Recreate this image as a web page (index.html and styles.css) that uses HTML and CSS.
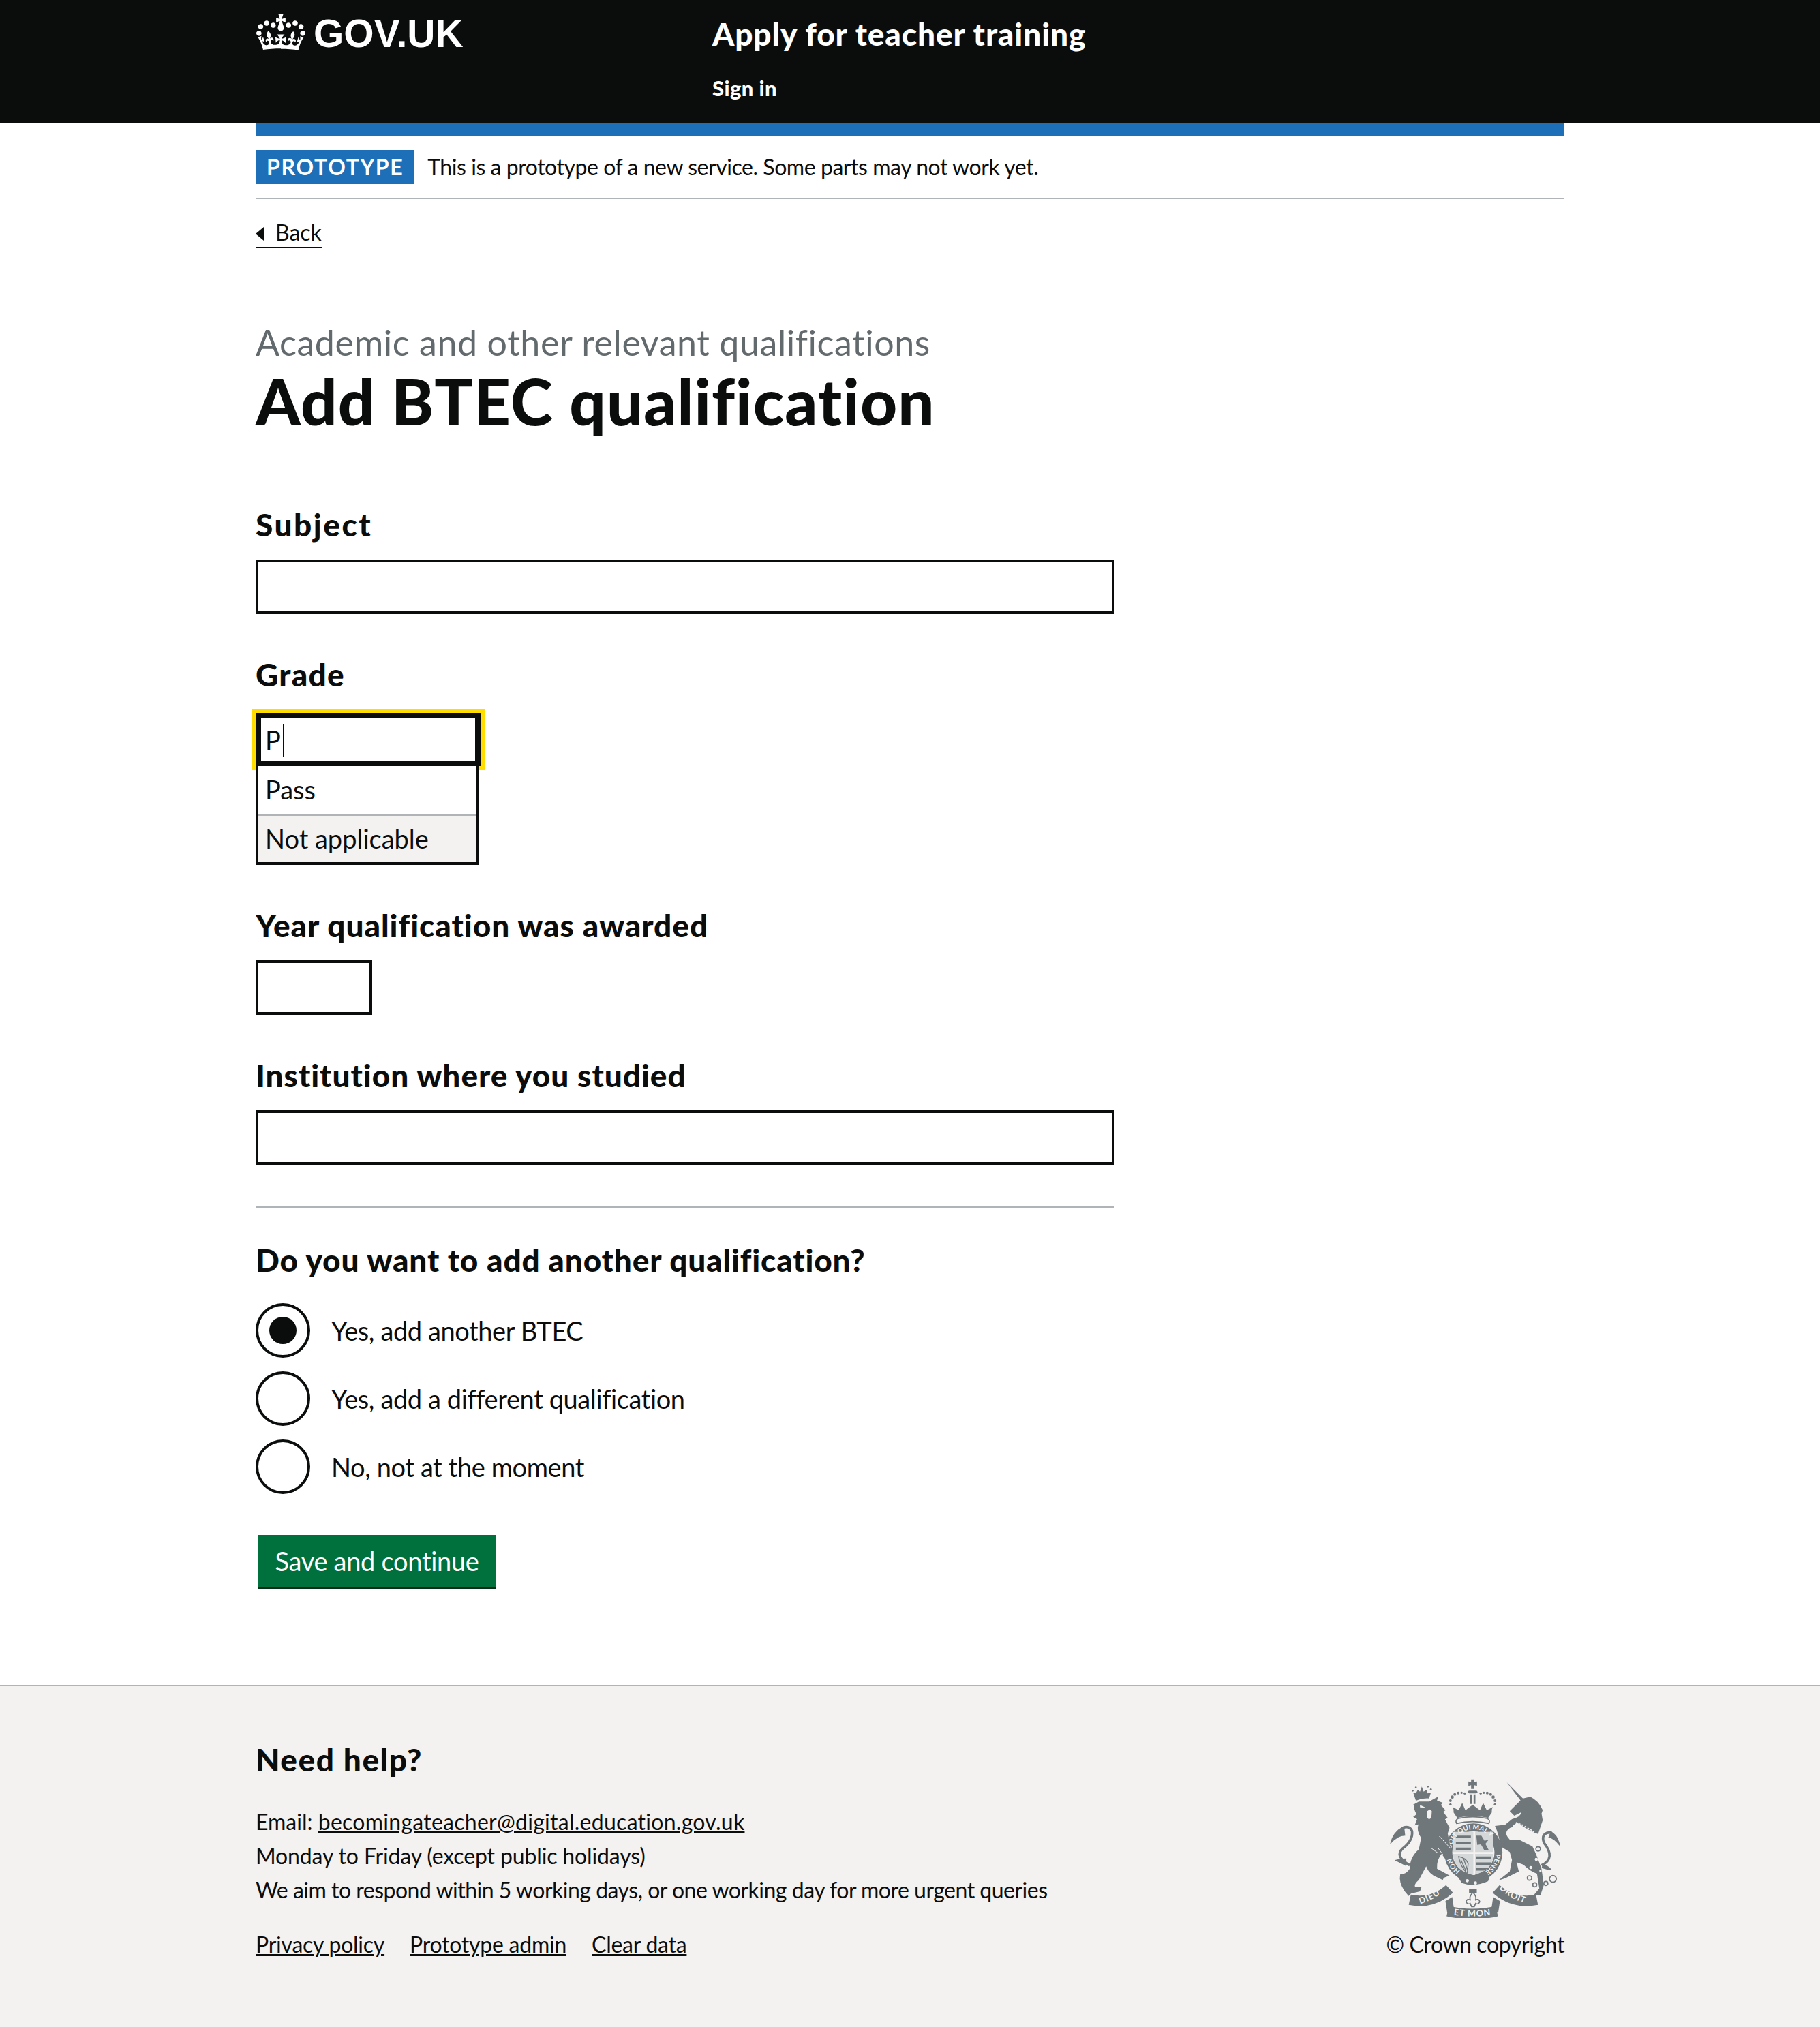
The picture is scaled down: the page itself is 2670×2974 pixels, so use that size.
FILE: index.html
```html
<!DOCTYPE html>
<html lang="en">
<head>
    <meta charset="UTF-8">
    <title>Add BTEC qualification</title>
    <link rel="stylesheet" href="styles.css">
</head>
<body>
    <header class="header">
        <div class="container header-inner">
            <a class="logo" href="#">
                <svg class="logo-crown" viewBox="0 0 132 97"><path fill="currentColor" fill-rule="evenodd" d="M25 30.2c3.5 1.5 7.7-.2 9.1-3.7 1.5-3.6-.2-7.8-3.9-9.2-3.6-1.4-7.6.3-9.1 3.9-1.4 3.5.3 7.5 3.9 9zM9 39.5c3.6 1.5 7.8-.2 9.2-3.7 1.5-3.6-.2-7.8-3.9-9.1-3.6-1.5-7.6.2-9.1 3.8-1.4 3.5.3 7.5 3.8 9zM4.4 57.2c3.5 1.5 7.7-.2 9.1-3.8 1.5-3.6-.2-7.7-3.9-9.1-3.5-1.5-7.6.3-9.1 3.8-1.4 3.5.3 7.6 3.9 9.1zm38.3-21.4c3.5 1.5 7.7-.2 9.1-3.8 1.5-3.6-.2-7.7-3.9-9.1-3.6-1.5-7.6.3-9.1 3.8-1.3 3.6.4 7.7 3.9 9.1zm64.4-5.6c-3.6 1.5-7.8-.2-9.1-3.7-1.5-3.6.2-7.8 3.8-9.2 3.6-1.4 7.7.3 9.2 3.9 1.3 3.5-.4 7.5-3.9 9zm15.9 9.3c-3.6 1.5-7.7-.2-9.1-3.7-1.5-3.6.2-7.8 3.7-9.1 3.6-1.5 7.7.2 9.2 3.8 1.5 3.5-.3 7.5-3.8 9zm4.7 17.7c-3.6 1.5-7.8-.2-9.2-3.8-1.5-3.6.2-7.7 3.9-9.1 3.6-1.5 7.7.3 9.2 3.8 1.3 3.5-.4 7.6-3.9 9.1zM89.3 35.8c-3.6 1.5-7.8-.2-9.2-3.8-1.4-3.6.2-7.7 3.9-9.1 3.6-1.5 7.7.3 9.2 3.8 1.4 3.6-.3 7.7-3.9 9.1zM69.7 17.7l8.9 4.7V9.3l-8.9 2.8c-.2-.3-.5-.6-.9-.9L72.4 0H59.6l3.5 11.2c-.3.3-.6.5-.9.9l-8.8-2.8v13.1l8.8-4.7c.3.3.6.7.9.9l-5 15.4v.1c-.2.8-.4 1.6-.4 2.4 0 4.1 3.1 7.5 7 8.1h.2c.3 0 .7.1 1 .1.4 0 .7 0 1-.1h.2c4-.6 7.1-4.1 7.1-8.1 0-.8-.1-1.7-.4-2.4V34l-5.1-15.4c.4-.2.7-.6 1-.9zM66 92.8c16.9 0 32.8 1.1 47.1 3.2 4-16.9 8.9-26.7 14-33.5l-9.6-3.4c1 4.9 1.1 7.2 0 10.2-1.5-1.4-3-4.3-4.2-8.7L108.6 76c2.8-2 5-3.2 7.5-3.3-4.4 9.4-10 11.9-13.6 11.2-4.3-.8-6.3-4.6-5.6-7.9 1-4.7 5.7-5.9 8-.5 4.3-8.7-3-11.4-7.6-8.8 7.1-7.2 7.9-13.5 2.1-21.1-8 6.1-8.1 12.3-4.5 20.8-4.7-5.4-12.1-2.5-9.5 6.2 3.4-5.2 7.9-2 7.2 3.1-.6 4.3-6.4 7.8-13.5 7.2-10.3-.9-10.9-8-11.2-13 2.5-.5 7.1 1.8 11 7.3L80.2 60c-4.1 4.4-8 5.3-12.3 5.4 1.4-4.4 8-11.6 8-11.6H55.5s6.4 7.2 7.9 11.6c-4.2-.1-8-1-12.3-5.4l1.4 16.4c3.9-5.5 8.5-7.7 10.9-7.3-.3 5-.9 12.1-11.1 13-7.2.6-12.9-2.9-13.5-7.2-.7-5 3.8-8.3 7.1-3.1 2.7-8.7-4.6-11.6-9.4-6.2 3.7-8.5 3.6-14.7-4.6-20.8-5.8 7.6-5 13.9 2.2 21.1-4.7-2.6-11.9.1-7.7 8.8 2.3-5.5 7.1-4.2 8.1.5.7 3.3-1.3 7.1-5.7 7.9-3.5.7-9-1.8-13.5-11.2 2.5.1 4.7 1.3 7.5 3.3l-4.7-15.4c-1.2 4.4-2.7 7.2-4.3 8.7-1.1-3-.9-5.3 0-10.2l-9.5 3.4c5 6.9 9.9 16.7 14 33.5 14.8-2.1 30.8-3.2 47.7-3.2z"></path></svg>
                <span class="logo-text">GOV.UK</span>
            </a>
            <div class="service">
                <a class="service-name" href="#">Apply for teacher training</a>
                <a class="service-nav" href="#">Sign in</a>
            </div>
        </div>
    </header>

    <div class="container">
        <div class="blue-bar"></div>
        <div class="phase">
            <strong class="tag">PROTOTYPE</strong>
            <span class="phase-text">This is a prototype of a new service. Some parts may not work yet.</span>
        </div>
        <a class="back" href="#">Back</a>

        <main class="main">
            <span class="caption">Academic and other relevant qualifications</span>
            <h1 class="title">Add BTEC qualification</h1>

            <form class="form">
                <div class="group">
                    <label class="label label-subject">Subject</label>
                    <input class="input" type="text">
                </div>

                <div class="group">
                    <label class="label label-combo">Grade</label>
                    <div class="combo">
                        <div class="combo-input">P<span class="caret"></span></div>
                        <ul class="combo-list">
                            <li class="combo-item">Pass</li>
                            <li class="combo-item combo-item-hover">Not applicable</li>
                        </ul>
                    </div>
                </div>

                <div class="group">
                    <label class="label">Year qualification was awarded</label>
                    <input class="input input-year" type="text">
                </div>

                <div class="group">
                    <label class="label">Institution where you studied</label>
                    <input class="input" type="text">
                </div>

                <hr class="rule">

                <h2 class="legend">Do you want to add another qualification?</h2>
                <div class="radios">
                    <label class="radio"><span class="radio-mark radio-mark-on"></span>Yes, add another BTEC</label>
                    <label class="radio"><span class="radio-mark"></span>Yes, add a different qualification</label>
                    <label class="radio"><span class="radio-mark"></span>No, not at the moment</label>
                </div>

                <button class="button" type="button">Save and continue</button>
            </form>
        </main>
    </div>

    <footer class="footer">
        <div class="container footer-inner">
            <div class="footer-left">
                <h2 class="footer-title">Need help?</h2>
                <p class="footer-line">Email: <a class="footer-mail" href="#">becomingateacher@digital.education.gov.uk</a></p>
                <p class="footer-line footer-hours">Monday to Friday (except public holidays)</p>
                <p class="footer-line footer-aim">We aim to respond within 5 working days, or one working day for more urgent queries</p>
                <div class="footer-links">
                    <a href="#">Privacy policy</a>
                    <a href="#">Prototype admin</a>
                    <a href="#">Clear data</a>
                </div>
            </div>
            <div class="footer-right">
                <svg class="crest" viewBox="115 90 755 612">
                    <defs>
                        <path id="garter-top" d="M388 397A98 98 0 0 1 583 405"/>
                        <path id="garter-right" d="M583 420A98 98 0 0 1 520 505"/>
                        <path id="garter-left" d="M428 494A99 99 0 0 1 386 420"/>
                        <path id="motto-left" d="M250 640Q315 622 366 574"/>
                        <path id="motto-mid" d="M398 688Q480 702 572 688"/>
                        <path id="motto-right" d="M598 572Q650 622 735 644"/>
                        <clipPath id="shield"><path d="M396 322H574V420Q574 490 485 514 396 490 396 420Z"/></clipPath>
                    </defs>

                    <!-- royal crown -->
                    <g class="crest-fill">
                        <path d="M475 92h14v12l12-3v20l-12-3v16h-14v-16l-12 3v-20l12 3z"/>
                        <rect x="461" y="142" width="42" height="12" rx="6"/>
                        <path d="M470 158h8v42h-8zM486 158h8v42h-8z"/>
                        <circle cx="392" cy="170" r="7"/><circle cx="384" cy="186" r="6"/><circle cx="384" cy="202" r="5"/><circle cx="403" cy="158" r="6"/><circle cx="418" cy="152" r="6"/><circle cx="433" cy="151" r="5"/><circle cx="447" cy="154" r="5"/>
                        <circle cx="572" cy="170" r="7"/><circle cx="580" cy="186" r="6"/><circle cx="580" cy="202" r="5"/><circle cx="561" cy="158" r="6"/><circle cx="546" cy="152" r="6"/><circle cx="531" cy="151" r="5"/><circle cx="517" cy="154" r="5"/>
                        <path d="M398 238q2-12-4-24l26 14 16-32 14 32 32-24 32 24 14-32 16 32 26-14q-6 12-4 24l-16 24q-68-18-136 0z"/>
                    </g>
                    <path class="crest-band" d="M411 286q-8-16 8-22 64-14 126 0 16 6 8 22-72-16-142 0z"/>

                    <!-- garter and shield -->
                    <circle class="crest-fill" cx="485" cy="414" r="128"/>
                    <circle class="crest-bg" cx="485" cy="414" r="93"/>
                    <g clip-path="url(#shield)">
                        <rect class="crest-shade" x="396" y="322" width="178" height="194"/>
                        <path class="crest-stripes" d="M408 345h66M408 372h66M408 398h66M498 437h66M498 463h66M498 488h66"/>
                        <path class="crest-fill" d="M498 340h22l14 22 18-4-14 18 14 26h-20l-14-24-16 2z"/>
                        <path class="crest-harp" d="M420 432q30 4 42 30l-4 44q-30-30-38-74zM430 446l22 48M442 442l16 46"/>
                        <path class="crest-cross" d="M489 320V514M396 416H574"/>
                    </g>
                    <text class="crest-text"><textPath href="#garter-top">SOIT QUI MAL Y</textPath></text>
                    <text class="crest-text"><textPath href="#garter-right">PENSE</textPath></text>
                    <text class="crest-text"><textPath href="#garter-left">HONI</textPath></text>
                    <path class="crest-fill" d="M412 512q16-18 38 2 50 22 108 0l-8 26q-60 28-116 8z"/>
                    <circle class="crest-bg" cx="458" cy="538" r="7"/><circle class="crest-bg" cx="494" cy="548" r="7"/>

                    <!-- lion -->
                    <g class="crest-fill">
                        <path d="M218 205l27-15h45l40-22-5 17 25 10-8 10 20 23-10 7 20 27-12 6 20 37-8 25 23 115-35-5-15-20q-22 25-20 65l55 30-25 10-5 10-25-12q-35-13-48-48l-32 60q-25 20-15 32l27-2-7 20-40 10-10 10-17-20q-28-40-20-75 27 0 42-25 0-50 40-85l10-50q-22-35-12-60l-16 5 10-28-17-10 15-12q-15-25-12-45z"/>
                        <path d="M232 186l-12-36 12 4 8-16 10 8 8-22 8 22 12-8 6 16 14-4-8 26q-30-2-58 10z"/>
                        <circle cx="218" cy="142" r="4"/><circle cx="298" cy="136" r="4"/><circle cx="232" cy="128" r="4"/><circle cx="285" cy="124" r="4"/>
                        <path d="M180 298q-50 22-62 80 32-38 67-38zM190 440q-30 0-52 8 20 10 50 25z"/>
                    </g>
                    <path class="crest-stroke" d="M205 470q-70-40-30-75 45-35 40-75-10-25-40-15"/>
                    <path class="crest-bg" d="M250 205l26 12-26-2zM282 232l12-8 8 8-2 30-10 6-10-8z"/>
                    <path class="crest-cutline" d="M335 342l48 52M300 395l30 22M330 395l22 30"/>

                    <!-- unicorn -->
                    <path class="crest-fill" d="M632 105l74 74-12 8z"/>
                    <path class="crest-fill" d="M645 232l55-55 35-8q35 15 55 58l-5 15 5 30-20 60q-25-5-93-50l-32 25q-30 20 0 50h40l60 30q20 40 40 100l10 70-15 45h-30l25-30-10-65q-30-10-60-40l-30-10 10 40-60 30-30 10 50-40 10-50-10-35-40-25q-10-60-25-90l45-5 30-25q40-10 40-30l-30 15z"/>
                    <path class="crest-stroke" d="M785 470q65-30 10-100-15-45 35-45"/>
                    <path class="crest-fill" d="M825 320q35 15 42 68-25-35-52-40zM790 465q25 5 40 25-25 0-45-8z"/>
                    <path class="crest-chain" d="M672 282q45 15 88 48"/>
                    <g class="crest-ring">
                        <circle cx="648" cy="292" r="10"/><circle cx="636" cy="376" r="11"/><circle cx="770" cy="398" r="10"/>
                        <circle cx="732" cy="526" r="10"/><circle cx="755" cy="556" r="9"/><circle cx="804" cy="550" r="9"/><circle cx="835" cy="530" r="15"/>
                    </g>
                    <circle class="crest-bg" cx="762" cy="444" r="7"/><circle class="crest-bg" cx="738" cy="480" r="7"/><circle class="crest-bg" cx="780" cy="495" r="5"/>

                    <!-- motto ribbon -->
                    <path class="crest-ribbon" d="M205 622q100 20 175-48"/>
                    <path class="crest-ribbon" d="M372 672q110 25 216 0"/>
                    <path class="crest-ribbon" d="M585 574q75 68 180 48"/>
                    <path class="crest-fill" d="M362 628l30-18 8 55-30 15zM602 628l-30-18-8 55 30 15z"/>
                    <text class="crest-motto"><textPath href="#motto-left">DIEU</textPath></text>
                    <text class="crest-motto"><textPath href="#motto-mid">ET MON</textPath></text>
                    <text class="crest-motto"><textPath href="#motto-right">DROIT</textPath></text>
                    <rect class="crest-fill" x="466" y="574" width="34" height="18"/>
                    <path class="crest-fleur" d="M483 590q20 20 10 34 16-10 20 6-4 14-18 8l-6 14h-12l-6-14q-14 6-18-8 4-16 20-6-10-14 10-34z"/>
                </svg>
                <span class="copyright">© Crown copyright</span>
            </div>
        </div>
    </footer>
</body>
</html>
```

FILE: styles.css
```css
* {
    box-sizing: border-box;
}

body {
    margin: 0;
    font-family: "Lato", sans-serif;
    font-size: 38px;
    line-height: 50px;
    font-variant-ligatures: none;
    color: #0b0c0c;
    background-color: #ffffff;
}

a {
    color: #0b0c0c;
}

.container {
    width: 1920px;
    margin: 0 auto;
}

/* header */
.header {
    height: 180px;
    background-color: #0b0c0c;
}

.header-inner {
    display: flex;
}

.logo {
    width: 670px;
    height: 100px;
    display: flex;
    color: #ffffff;
    text-decoration: none;
}

.logo-crown {
    width: 72px;
    height: 53px;
    margin-top: 21px;
    margin-left: 1px;
}

.logo-text {
    margin-left: 12px;
    margin-top: 14px;
    font-family: "Liberation Sans", sans-serif;
    font-size: 57px;
    line-height: 70px;
    font-weight: 700;
}

.service {
    display: flex;
    flex-direction: column;
    align-items: flex-start;
    padding-top: 20px;
}

.service-name {
    font-size: 46px;
    line-height: 60px;
    font-weight: 900;
    letter-spacing: 0.9px;
    color: #ffffff;
    text-decoration: none;
}

.service-nav {
    margin-top: 29px;
    font-size: 31px;
    line-height: 40px;
    font-weight: 900;
    letter-spacing: 0.4px;
    color: #ffffff;
    text-decoration: none;
}

/* phase banner */
.blue-bar {
    height: 20px;
    background-color: #1d70b8;
}

.phase {
    height: 92px;
    padding-top: 20px;
    display: flex;
    align-items: flex-start;
    border-bottom: 2px solid #b1b4b6;
}

.tag {
    height: 50px;
    padding: 0 16px;
    font-size: 32px;
    line-height: 50px;
    font-weight: 700;
    letter-spacing: 1.6px;
    color: #ffffff;
    background-color: #1d70b8;
}

.phase-text {
    margin-left: 19px;
    font-size: 32px;
    line-height: 50px;
    letter-spacing: -0.45px;
}

.back {
    display: block;
    width: fit-content;
    margin-top: 30px;
    padding-left: 29px;
    font-size: 32px;
    line-height: 38px;
    height: 42px;
    text-decoration: none;
    border-bottom: 2px solid #0b0c0c;
    position: relative;
}

.back::before {
    content: "";
    position: absolute;
    left: 0;
    top: 11px;
    border-top: 10px solid transparent;
    border-bottom: 10px solid transparent;
    border-right: 12px solid #0b0c0c;
}

/* main */
.main {
    padding-top: 108px;
}

.caption {
    display: block;
    font-size: 52px;
    line-height: 60px;
    letter-spacing: 0.55px;
    color: #626a6e;
}

.title {
    margin: 6px 0 104px;
    font-size: 94px;
    line-height: 100px;
    font-weight: 900;
    letter-spacing: 1.1px;
}

.form {
    width: 1260px;
}

.group {
    margin-bottom: 61px;
}

.label {
    display: block;
    margin-bottom: 23px;
    font-size: 46px;
    line-height: 56px;
    font-weight: 900;
    letter-spacing: 0.95px;
}

.label-subject {
    letter-spacing: 2.5px;
}

.label-combo {
    margin-bottom: 28px;
    letter-spacing: 1.3px;
}

.input {
    display: block;
    width: 100%;
    height: 80px;
    border: 4px solid #0b0c0c;
    border-radius: 0;
    background-color: #ffffff;
}

.input-year {
    width: 171px;
}

/* grade autocomplete */
.combo {
    position: relative;
    width: 330px;
}

.combo-input {
    position: relative;
    height: 78px;
    padding: 0 6px;
    font-size: 38px;
    line-height: 62px;
    border: 8px solid #0b0c0c;
    box-shadow: 0 0 0 6px #ffdd00;
}

.caret {
    display: inline-block;
    width: 2px;
    height: 48px;
    margin-left: 3px;
    vertical-align: -10px;
    background-color: #0b0c0c;
}

.combo-list {
    position: relative;
    width: 328px;
    height: 145px;
    margin: 0;
    padding: 0;
    list-style: none;
    border: 4px solid #0b0c0c;
    border-top: none;
    background-color: #ffffff;
}

.combo-item {
    height: 71px;
    padding: 0 10px;
    line-height: 69px;
}

.combo-item-hover {
    height: 70px;
    line-height: 66px;
    border-top: 2px solid #b1b4b6;
    background-color: #f3f2f1;
}

.rule {
    height: 2px;
    margin: 0 0 49px;
    border: none;
    background-color: #b1b4b6;
}

.legend {
    margin: 0 0 35px;
    font-size: 46px;
    line-height: 56px;
    font-weight: 900;
    letter-spacing: 0.83px;
}

/* radios */
.radios {
    display: flex;
    flex-direction: column;
    gap: 20px;
    margin-bottom: 60px;
}

.radio {
    display: flex;
    align-items: center;
    height: 80px;
    letter-spacing: -0.4px;
}

.radio-mark {
    position: relative;
    width: 80px;
    height: 80px;
    margin-right: 31px;
    border: 4px solid #0b0c0c;
    border-radius: 50%;
}

.radio-mark-on::after {
    content: "";
    position: absolute;
    left: 16px;
    top: 16px;
    width: 40px;
    height: 40px;
    border-radius: 50%;
    background-color: #0b0c0c;
}

.button {
    display: block;
    width: 348px;
    height: 76px;
    margin: 0 0 144px 4px;
    padding: 0 0 1px;
    border: none;
    font-family: "Lato", sans-serif;
    font-size: 38px;
    letter-spacing: -0.3px;
    color: #ffffff;
    background-color: #00703c;
    box-shadow: 0 4px 0 #002d18;
}

/* footer */
.footer {
    height: 502px;
    border-top: 2px solid #b1b4b6;
    background-color: #f3f2f1;
}

.footer-inner {
    display: flex;
    justify-content: space-between;
}

.footer-left {
    padding-top: 80px;
}

.footer-title {
    margin: 0 0 38px;
    font-size: 46px;
    line-height: 56px;
    font-weight: 900;
    letter-spacing: 1.5px;
}

.footer-line {
    margin: 0;
    font-size: 32px;
    line-height: 50px;
}

.footer-mail {
    letter-spacing: 0.27px;
}

.footer-hours {
    letter-spacing: -0.14px;
}

.footer-aim {
    letter-spacing: -0.5px;
}

.footer-links {
    display: flex;
    gap: 37px;
    margin-top: 30px;
    font-size: 32px;
    line-height: 50px;
    letter-spacing: -0.25px;
}

.footer-right {
    display: flex;
    flex-direction: column;
    align-items: flex-end;
    padding-top: 136px;
}

.crest {
    display: block;
    width: 252px;
    height: 204px;
    margin-right: 5px;
}

.copyright {
    margin-top: 14px;
    font-size: 32px;
    line-height: 50px;
    letter-spacing: -0.4px;
}

/* crest parts */
.crest-fill {
    fill: #6f777b;
}

.crest-bg {
    fill: #f3f2f1;
}

.crest-shade {
    fill: #d5d8d9;
}

.crest-band {
    fill: #f3f2f1;
    stroke: #6f777b;
    stroke-width: 5;
}

.crest-stripes {
    fill: none;
    stroke: #6f777b;
    stroke-width: 11;
}

.crest-harp {
    fill: none;
    stroke: #6f777b;
    stroke-width: 4;
}

.crest-cross {
    fill: none;
    stroke: #f3f2f1;
    stroke-width: 8;
}

.crest-stroke {
    fill: none;
    stroke: #6f777b;
    stroke-width: 11;
}

.crest-cutline {
    fill: none;
    stroke: #f3f2f1;
    stroke-width: 3;
}

.crest-chain {
    fill: none;
    stroke: #f3f2f1;
    stroke-width: 5;
    stroke-dasharray: 8 6;
}

.crest-ring {
    fill: none;
    stroke: #6f777b;
    stroke-width: 5;
}

.crest-ribbon {
    fill: none;
    stroke: #6f777b;
    stroke-width: 46;
}

.crest-fleur {
    fill: #f3f2f1;
    stroke: #6f777b;
    stroke-width: 5;
}

.crest-text {
    font-family: "Lato", sans-serif;
    font-size: 30px;
    font-weight: 700;
    fill: #f3f2f1;
}

.crest-motto {
    font-family: "Lato", sans-serif;
    font-size: 38px;
    font-weight: 700;
    fill: #f3f2f1;
    letter-spacing: 3px;
}
```
